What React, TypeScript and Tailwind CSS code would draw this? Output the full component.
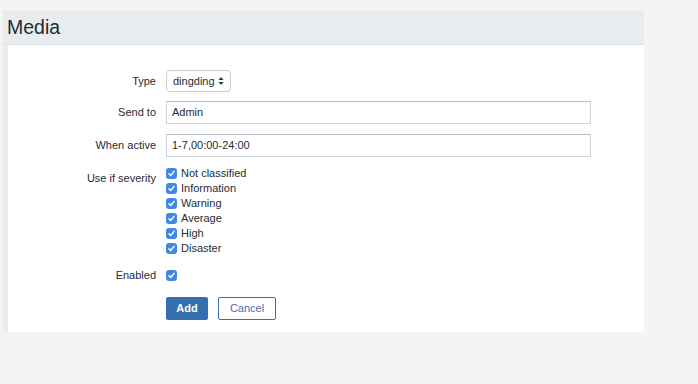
import React from "react";

function Check() {
  return (
    <span className="flex h-[11px] w-[11px] shrink-0 items-center justify-center rounded-[3px] bg-[#3f88e4]">
      <svg width="9" height="9" viewBox="0 0 9 9" fill="none">
        <path d="M2 4.8 L3.7 6.5 L7 2.4" stroke="white" strokeWidth="1.5" strokeLinecap="round" strokeLinejoin="round" />
      </svg>
    </span>
  );
}

const severities = ["Not classified", "Information", "Warning", "Average", "High", "Disaster"];

export default function App() {
  return (
    <div
      className="h-[384px] w-[698px] bg-[#f4f4f4] pt-[10px] text-[11px] text-[#1f2c33]"
      style={{ fontFamily: '"Liberation Sans", Arial, sans-serif' }}
    >
      <div className="ml-[3px] w-[641px] bg-[#e9ecef]">
        <div className="flex h-[35px] items-center border-b border-[#dce1e5] pl-[4px] pt-[2px]">
          <h1 className="text-[19.5px] leading-none text-[#1f2c33]">Media</h1>
        </div>
        <div className="ml-[5px] h-[287px] bg-white pt-[25px]">
          <div className="flex h-[22px] items-center">
            <div className="w-[148px] pr-0 text-right">Type</div>
            <div className="ml-[10px] flex h-[22px] w-[65px] items-center rounded-[4px] border border-[#c9ced3] pl-[6px] text-[11px] text-[#1f2c33]">
              <span>dingding</span>
              <svg className="ml-[3px]" width="6" height="10" viewBox="0 0 6 10">
                <path d="M0.5 4 L3 1 L5.5 4 Z" fill="#333" />
                <path d="M0.5 6 L3 9 L5.5 6 Z" fill="#333" />
              </svg>
            </div>
          </div>
          <div className="mt-[9px] flex h-[23px] items-center">
            <div className="w-[148px] text-right">Send to</div>
            <div className="ml-[10px] flex h-[23px] w-[425px] items-center border border-[#cdd3d8] border-t-[#b4bec6] pl-[5px]">
              Admin
            </div>
          </div>
          <div className="mt-[10px] flex h-[23px] items-center">
            <div className="w-[148px] text-right">When active</div>
            <div className="ml-[10px] flex h-[23px] w-[425px] items-center border border-[#cdd3d8] border-t-[#b4bec6] pl-[5px]">
              1-7,00:00-24:00
            </div>
          </div>
          <div className="mt-[9px] flex">
            <div className="w-[148px] pt-[4px] text-right">Use if severity</div>
            <div className="ml-[10px] flex flex-col">
              {severities.map((s) => (
                <div key={s} className="flex h-[15px] items-center">
                  <Check />
                  <span className="ml-[4px]">{s}</span>
                </div>
              ))}
            </div>
          </div>
          <div className="mt-[12px] flex h-[15px] items-center">
            <div className="w-[148px] text-right">Enabled</div>
            <div className="ml-[10px]">
              <Check />
            </div>
          </div>
          <div className="ml-[158px] mt-[14px] flex gap-[10px]">
            <button className="h-[23px] w-[42px] rounded-[2px] bg-[#3470ad] text-[11px] font-bold text-white">
              Add
            </button>
            <button className="h-[23px] w-[58px] rounded-[2px] border border-[#3d72af] bg-white text-[11px] text-[#3d72af]">
              Cancel
            </button>
          </div>
        </div>
      </div>
    </div>
  );
}
